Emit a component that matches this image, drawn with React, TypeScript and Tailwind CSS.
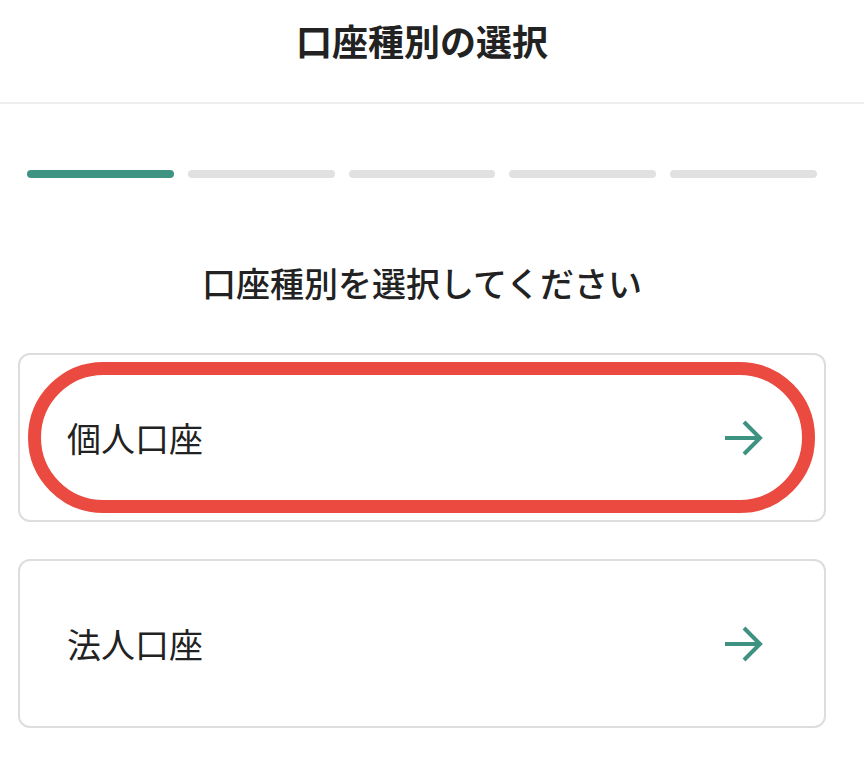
import React from 'react'

const Arrow: React.FC = () => (
  <svg width="40" height="38" viewBox="0 0 40 38" fill="none" className="text-[#3e9281]">
    <path d="M2 19H37M21 3L37 19L21 35" stroke="currentColor" strokeWidth="4" strokeLinecap="butt" strokeLinejoin="miter" />
  </svg>
)

const steps = [true, false, false, false, false]

export default function App() {
  return (
    <div
      className="min-h-[774px] w-[864px] bg-white text-[#222222]"
      style={{ fontFamily: '"Noto Sans CJK JP", "Noto Sans", sans-serif' }}
    >
      {/* Header */}
      <header className="flex h-[104px] justify-center border-b-2 border-[#eeeeee] pr-[20px] pt-[13px]">
        <h1 className="text-[36px] font-bold leading-[54px]">口座種別の選択</h1>
      </header>

      <main className="pl-[18px] pr-[38px]">
        {/* Progress */}
        <div className="mt-[66px] flex gap-[14px] px-[9px]">
          {steps.map((active, i) => (
            <div
              key={i}
              className={`h-2 flex-1 rounded-full ${active ? 'bg-[#3f9382]' : 'bg-[#e1e1e1]'}`}
            />
          ))}
        </div>

        <p className="mt-[79px] text-center text-[34px] font-medium leading-[51px]">
          口座種別を選択してください
        </p>

        <div className="mt-[45px] flex flex-col gap-[37px]">
          <div className="relative flex h-[169px] items-center justify-between rounded-[12px] border-2 border-[#dddddd] pl-[47px] pr-[61px]">
            <span className="text-[34px] leading-none">個人口座</span>
            <Arrow />
            {/* annotation */}
            <div className="pointer-events-none absolute bottom-[7px] left-[8px] right-[9px] top-[7px] rounded-full border-[13px] border-[#ea4a3f]" />
          </div>
          <div className="flex h-[169px] items-center justify-between rounded-[12px] border-2 border-[#dddddd] pl-[47px] pr-[61px]">
            <span className="text-[34px] leading-none">法人口座</span>
            <Arrow />
          </div>
        </div>
      </main>
    </div>
  )
}
